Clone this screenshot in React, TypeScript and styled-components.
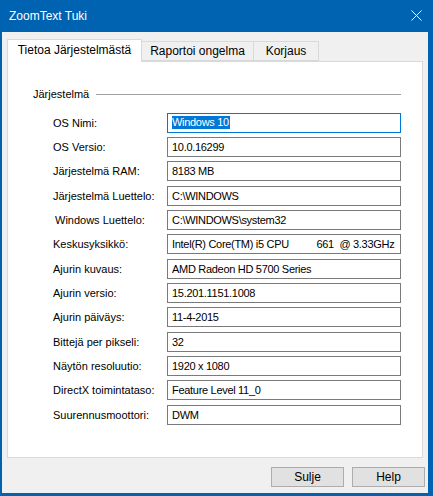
import React from "react";
import styled, { createGlobalStyle } from "styled-components";

const GlobalStyle = createGlobalStyle`
  html, body {
    margin: 0;
    padding: 0;
    background: #ffffff;
  }
  body {
    font-family: "Liberation Sans", Arial, sans-serif;
    font-size: 11px;
    color: #000000;
  }
`;

const uiFont = `"Liberation Sans", Arial, sans-serif`;

const Window = styled.div`
  width: 433px;
  height: 496px;
  box-sizing: border-box;
  display: flex;
  flex-direction: column;
  background: #0063b1;
  padding: 0 5px 3px 2px;
`;

const TitleBar = styled.div`
  height: 31px;
  display: flex;
  align-items: center;
  justify-content: space-between;
  margin: 0 -5px 0 -2px;
  padding: 0 8px 1px 9px;
  color: #ffffff;
  font-family: ${uiFont};
  font-size: 12px;
`;

const CloseButton = styled.div`
  width: 12px;
  height: 12px;
  margin-right: 3px;
  display: flex;
  align-items: center;
  justify-content: center;
`;

const Client = styled.div`
  flex: 1;
  background: #f0f0f0;
  display: flex;
  flex-direction: column;
  padding: 7px 3px 0 5px;
`;

const TabStrip = styled.div`
  height: 22px;
  display: flex;
  align-items: flex-end;
  position: relative;
  z-index: 1;
`;

const Tab = styled.div<{ $active?: boolean; $width: number }>`
  box-sizing: border-box;
  width: ${(p) => p.$width}px;
  height: ${(p) => (p.$active ? 23 : 20)}px;
  margin-bottom: ${(p) => (p.$active ? -1 : 0)}px;
  display: flex;
  align-items: center;
  justify-content: center;
  padding-bottom: ${(p) => (p.$active ? 2 : 0)}px;
  background: ${(p) => (p.$active ? "#ffffff" : "#f0f0f0")};
  border: 1px solid #d9d9d9;
  border-bottom: ${(p) => (p.$active ? "none" : "1px solid #d9d9d9")};
  border-left: ${(p) => (p.$active ? "1px solid #d9d9d9" : "none")};
  font-family: ${uiFont};
  font-size: 12px;
  color: #000000;
`;

const Panel = styled.div`
  box-sizing: border-box;
  width: 416px;
  height: 397px;
  background: #ffffff;
  border: 1px solid #d9d9d9;
  padding: 25px 0 0 0;
  display: flex;
  flex-direction: column;
`;

const GroupHeader = styled.div`
  height: 14px;
  display: flex;
  align-items: center;
  padding-left: 25px;
  margin-bottom: 11.7px;
`;

const GroupTitle = styled.span`
  line-height: 14px;
  margin-right: 7px;
`;

const GroupRule = styled.div`
  width: 305px;
  height: 1px;
  background: #a0a0a0;
`;

const Rows = styled.div`
  display: flex;
  flex-direction: column;
  gap: 4.33px;
`;

const Row = styled.div`
  display: flex;
  align-items: center;
  height: 20px;
`;

const Label = styled.div<{ $indent?: number }>`
  width: ${(p) => 114 - (p.$indent ?? 0)}px;
  padding-left: ${(p) => 45 + (p.$indent ?? 0)}px;
  white-space: nowrap;
`;

const Field = styled.div<{ $focused?: boolean }>`
  box-sizing: border-box;
  width: 234px;
  height: 20px;
  border: 1px solid ${(p) => (p.$focused ? "#0078d7" : "#7a7a7a")};
  padding: 0 4px;
  display: flex;
  align-items: center;
  white-space: pre;
  overflow: hidden;
  letter-spacing: -0.3px;
`;

const Selection = styled.span`
  background: #0078d7;
  color: #ffffff;
  line-height: 13px;
  padding-right: 1px;
`;

const Footer = styled.div`
  display: flex;
  justify-content: flex-end;
  gap: 8px;
  padding-top: 9px;
`;

const Button = styled.div`
  box-sizing: border-box;
  width: 73px;
  height: 20px;
  background: #e1e1e1;
  border: 1px solid #adadad;
  display: flex;
  align-items: center;
  justify-content: center;
  font-family: ${uiFont};
  font-size: 12px;
`;

const rows = [
  { label: "OS Nimi:", value: "Windows 10", focused: true },
  { label: "OS Versio:", value: "10.0.16299" },
  { label: "Järjestelmä RAM:", value: "8183 MB" },
  { label: "Järjestelmä Luettelo:", value: "C:\\WINDOWS" },
  { label: "Windows Luettelo:", value: "C:\\WINDOWS\\system32", indent: 2 },
  { label: "Keskusyksikkö:", value: "Intel(R) Core(TM) i5 CPU          661  @ 3.33GHz" },
  { label: "Ajurin kuvaus:", value: "AMD Radeon HD 5700 Series" },
  { label: "Ajurin versio:", value: "15.201.1151.1008" },
  { label: "Ajurin päiväys:", value: "11-4-2015" },
  { label: "Bittejä per pikseli:", value: "32" },
  { label: "Näytön resoluutio:", value: "1920 x 1080" },
  { label: "DirectX toimintataso:", value: "Feature Level 11_0" },
  { label: "Suurennusmoottori:", value: "DWM" },
];

export default function App() {
  return (
    <>
      <GlobalStyle />
      <Window>
        <TitleBar>
          <span>ZoomText Tuki</span>
          <CloseButton>
            <svg width="11" height="11" viewBox="0 0 11 11">
              <path d="M0.5 0.5 L10.5 10.5 M10.5 0.5 L0.5 10.5" stroke="#ffffff" strokeWidth="1" />
            </svg>
          </CloseButton>
        </TitleBar>
        <Client>
          <TabStrip>
            <Tab $active $width={135}>Tietoa Järjestelmästä</Tab>
            <Tab $width={112}>Raportoi ongelma</Tab>
            <Tab $width={65}>Korjaus</Tab>
          </TabStrip>
          <Panel>
            <GroupHeader>
              <GroupTitle>Järjestelmä</GroupTitle>
              <GroupRule />
            </GroupHeader>
            <Rows>
              {rows.map((r) => (
                <Row key={r.label}>
                  <Label $indent={r.indent}>{r.label}</Label>
                  <Field $focused={r.focused}>
                    {r.focused ? <Selection>{r.value}</Selection> : r.value}
                  </Field>
                </Row>
              ))}
            </Rows>
          </Panel>
          <Footer>
            <Button>Sulje</Button>
            <Button>Help</Button>
          </Footer>
        </Client>
      </Window>
    </>
  );
}
